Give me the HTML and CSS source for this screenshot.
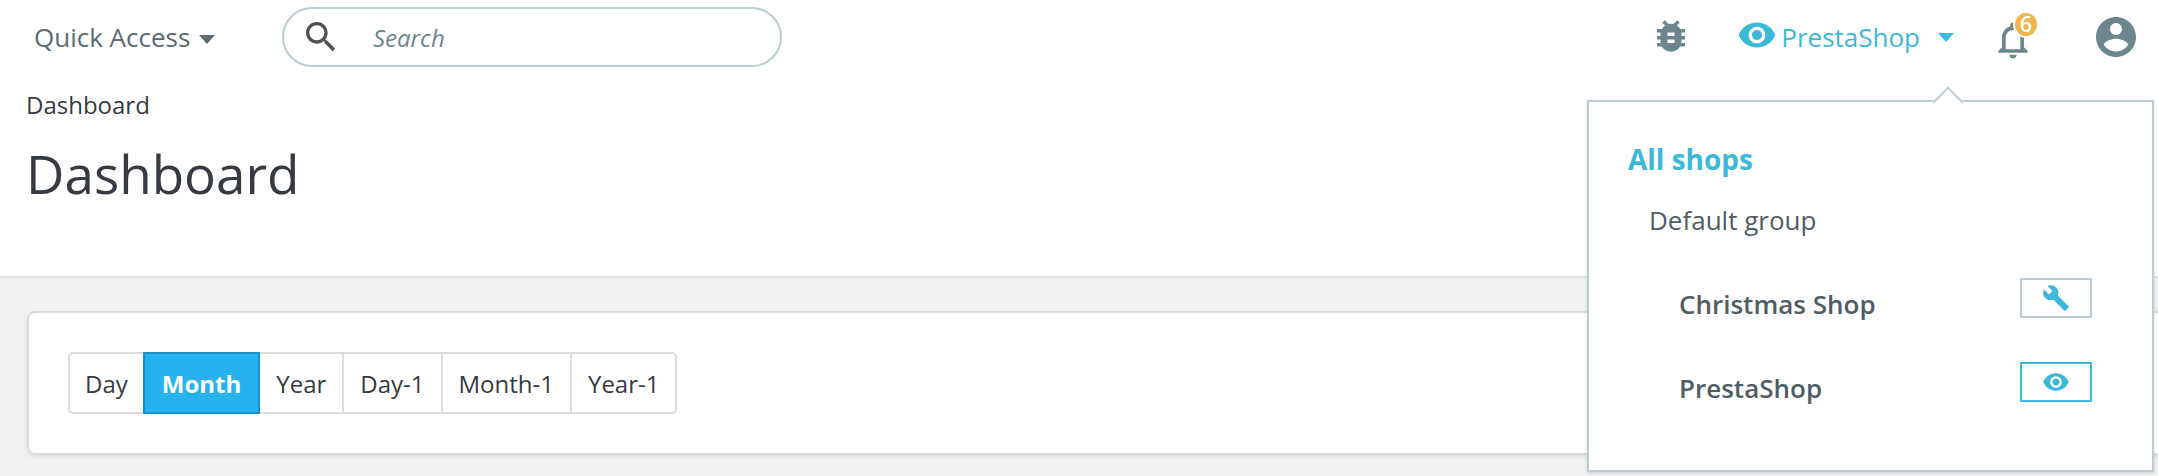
FILE: index.html
```html
<!DOCTYPE html>
<html lang="en">
<head>
	<meta charset="UTF-8">
	<title>Dashboard</title>
	<link rel="stylesheet" href="styles.css">
</head>
<body>
	<header class="topbar">
		<a class="quick-access">Quick Access <span class="caret"></span></a>
		<div class="search">
			<svg class="search-icon" viewBox="0 0 24 24"><path d="M15.5 14h-.79l-.28-.27C15.41 12.59 16 11.11 16 9.5 16 5.91 13.09 3 9.5 3S3 5.91 3 9.5 5.91 16 9.5 16c1.61 0 3.09-.59 4.23-1.57l.27.28v.79l5 4.99L20.49 19l-4.99-5zm-6 0C7.01 14 5 11.99 5 9.5S7.01 5 9.5 5 14 7.01 14 9.5 11.99 14 9.5 14z"/></svg>
			<span class="search-text">Search</span>
		</div>
		<div class="topbar-right">
			<svg class="bug-icon" viewBox="0 0 24 24"><path d="M20 8h-2.81c-.45-.78-1.07-1.45-1.82-1.96L17 4.41 15.59 3l-2.17 2.17C12.96 5.06 12.49 5 12 5c-.49 0-.96.06-1.41.17L8.41 3 7 4.41l1.62 1.63C7.88 6.55 7.26 7.22 6.81 8H4v2h2.09c-.05.33-.09.66-.09 1v1H4v2h2v1c0 .34.04.67.09 1H4v2h2.81c1.04 1.79 2.97 3 5.19 3s4.15-1.21 5.19-3H20v-2h-2.09c.05-.33.09-.66.09-1v-1h2v-2h-2v-1c0-.34-.04-.67-.09-1H20V8zm-6 8h-4v-2h4v2zm0-4h-4v-2h4v2z"/></svg>
			<div class="shop-switch">
				<svg class="eye-icon" viewBox="0 0 24 24"><path d="M12 4.5C7 4.5 2.73 7.61 1 12c1.73 4.39 6 7.5 11 7.5s9.27-3.11 11-7.5c-1.73-4.39-6-7.5-11-7.5zM12 17c-2.76 0-5-2.24-5-5s2.24-5 5-5 5 2.24 5 5-2.24 5-5 5zm0-8c-1.66 0-3 1.34-3 3s1.34 3 3 3 3-1.34 3-3-1.34-3-3-3z"/></svg>
				<span class="shop-name">PrestaShop</span>
				<span class="caret caret-blue"></span>
			</div>
			<div class="bell">
				<svg class="bell-icon" viewBox="0 0 24 24"><path d="M12 22c1.1 0 2-.9 2-2h-4c0 1.1.89 2 2 2zm6-6v-5c0-3.07-1.64-5.64-4.5-6.32V4c0-.83-.67-1.5-1.5-1.5s-1.5.67-1.5 1.5v.68C7.63 5.36 6 7.92 6 11v5l-2 2v1h16v-1l-2-2zm-2 1H8v-6c0-2.48 1.51-4.5 4-4.5s4 2.02 4 4.5v6z"/></svg>
				<span class="badge">6</span>
			</div>
			<svg class="user-icon" viewBox="0 0 24 24"><path d="M12 2C6.48 2 2 6.48 2 12s4.48 10 10 10 10-4.48 10-10S17.52 2 12 2zm0 3c1.66 0 3 1.34 3 3s-1.34 3-3 3-3-1.34-3-3 1.34-3 3-3zm0 14.2c-2.5 0-4.71-1.28-6-3.22.03-1.99 4-3.08 6-3.08 1.99 0 5.97 1.09 6 3.08-1.29 1.94-3.5 3.22-6 3.22z"/></svg>
		</div>
	</header>

	<section class="page-head">
		<div class="breadcrumb">Dashboard</div>
		<h1 class="page-title">Dashboard</h1>
	</section>

	<main class="content">
		<div class="card">
			<div class="btn-group">
				<button type="button" class="btn">Day</button>
				<button type="button" class="btn active">Month</button>
				<button type="button" class="btn">Year</button>
				<button type="button" class="btn">Day-1</button>
				<button type="button" class="btn">Month-1</button>
				<button type="button" class="btn">Year-1</button>
			</div>
		</div>
	</main>

	<div class="shop-menu">
		<div class="all-shops">All shops</div>
		<div class="shop-group">Default group</div>
		<div class="shop-row">
			<span>Christmas Shop</span>
			<a class="shop-action"><svg viewBox="0 0 24 24"><path d="M22.7 19l-9.1-9.1c.9-2.3.4-5-1.5-6.9-2-2-5-2.4-7.4-1.3L9 6 6 9 1.6 4.7C.4 7.1.9 10.1 2.9 12.1c1.9 1.9 4.6 2.4 6.9 1.5l9.1 9.1c.4.4 1 .4 1.4 0l2.3-2.3c.5-.4.5-1.1.1-1.4z"/></svg></a>
		</div>
		<div class="shop-row">
			<span>PrestaShop</span>
			<a class="shop-action current"><svg viewBox="0 0 24 24"><path d="M12 4.5C7 4.5 2.73 7.61 1 12c1.73 4.39 6 7.5 11 7.5s9.27-3.11 11-7.5c-1.73-4.39-6-7.5-11-7.5zM12 17c-2.76 0-5-2.24-5-5s2.24-5 5-5 5 2.24 5 5-2.24 5-5 5zm0-8c-1.66 0-3 1.34-3 3s1.34 3 3 3 3-1.34 3-3-1.34-3-3-3z"/></svg></a>
		</div>
	</div>
</body>
</html>
```

FILE: styles.css
```css
html, body {
	overflow: hidden;
}
body {
	margin: 0;
	position: relative;
	height: 476px;
	font-family: "Open Sans", sans-serif;
	color: #363a41;
	background: #eff1f2;
}
svg {
	display: block;
	fill: currentColor;
}

/* top bar */
.topbar {
	display: flex;
	align-items: center;
	height: 74px;
	padding-left: 34px;
	background: white;
}
.quick-access {
	display: flex;
	align-items: center;
	gap: 9px;
	width: 248px;
	font-size: 26px;
	color: #5a6b73;
}
.caret {
	display: block;
	margin-top: 5px;
	border-top: 9px solid #5a6b73;
	border-left: 8px solid transparent;
	border-right: 8px solid transparent;
}
.caret-blue {
	margin-top: 0;
	border-top-color: #3cb9d8;
}
.search {
	display: flex;
	align-items: center;
	box-sizing: border-box;
	width: 500px;
	height: 60px;
	padding-left: 17px;
	border: 2px solid #bbcdd2;
	border-radius: 30px;
}
.search-icon {
	width: 40px;
	height: 40px;
	color: #4f4f4f;
}
.search-text {
	margin-left: 32px;
	font-size: 24px;
	font-style: italic;
	color: #6c868e;
}
.topbar-right {
	display: flex;
	align-items: center;
	margin-left: auto;
	padding-right: 18px;
	color: #6c868e;
}
.bug-icon {
	width: 42px;
	height: 42px;
	margin-bottom: 3px;
}
.shop-switch {
	display: flex;
	align-items: center;
	margin-left: 45px;
	color: #3cb9d8;
}
.eye-icon {
	width: 40px;
	height: 40px;
	margin-bottom: 5px;
}
.shop-name {
	margin-left: 4px;
	font-size: 26px;
}
.shop-switch .caret {
	margin-left: 18px;
}
.bell {
	position: relative;
	margin-left: 37px;
	margin-top: 6px;
}
.bell-icon {
	width: 44px;
	height: 44px;
}
.badge {
	position: absolute;
	top: -5px;
	left: 24px;
	width: 22px;
	height: 23px;
	border-radius: 50%;
	background: #f0b44f;
	box-shadow: 0 0 0 2px white;
	color: white;
	font-size: 21px;
	font-weight: 600;
	line-height: 23px;
	text-align: center;
}
.user-icon {
	width: 48px;
	height: 48px;
	margin-left: 57px;
}

/* page head */
.page-head {
	height: 202px;
	padding-left: 26px;
	background: white;
	border-bottom: 2px solid #dfe1e3;
}
.breadcrumb {
	padding-top: 14px;
	font-size: 24px;
}
.page-title {
	margin: 15px 0 0;
	font-size: 53px;
	font-weight: 400;
	line-height: 76px;
}

/* graph card */
.content {
	padding: 33px 0 0 27px;
}
.card {
	box-sizing: border-box;
	height: 144px;
	margin-right: -40px;
	padding: 39px 39px;
	background: white;
	border: 2px solid #dbdbdb;
	border-radius: 8px;
	box-shadow: 0 2px 4px rgba(0, 0, 0, .08);
}
.btn-group {
	display: flex;
}
.btn {
	height: 62px;
	padding: 0 16px;
	font: 24px "Open Sans", sans-serif;
	color: #363a41;
	background: white;
	border: 2px solid #dcdcdc;
	border-left-width: 0;
}
.btn:first-child {
	padding: 0 15px;
	border-left-width: 2px;
	border-radius: 5px 0 0 5px;
}
.btn:last-child {
	border-radius: 0 5px 5px 0;
}
.btn.active {
	margin-left: -2px;
	padding: 0 17px;
	font-weight: 700;
	color: white;
	background: #25b2ee;
	border: 2px solid #1a8fc4;
}

/* shop dropdown */
.shop-menu {
	position: absolute;
	top: 100px;
	left: 1587px;
	box-sizing: border-box;
	width: 567px;
	height: 372px;
	padding: 38px 60px 0 39px;
	color: #4f5d65;
	background: white;
	border: 2px solid #bbcdd2;
	box-shadow: 0 1px 3px rgba(0, 0, 0, .15);
}
.shop-menu::before {
	content: "";
	position: absolute;
	top: -11px;
	left: 348px;
	width: 20px;
	height: 20px;
	background: white;
	border-top: 2px solid #bbcdd2;
	border-left: 2px solid #bbcdd2;
	transform: rotate(45deg);
}
.all-shops {
	font-size: 28px;
	font-weight: 700;
	color: #3cb9d8;
}
.shop-group {
	margin: 24px 0 0 21px;
	font-size: 26px;
}
.shop-row {
	display: flex;
	align-items: center;
	justify-content: space-between;
	height: 40px;
	margin-left: 51px;
	font-size: 26px;
	font-weight: 600;
}
.shop-row span {
	padding-top: 12px;
}
.shop-group + .shop-row {
	margin-top: 40px;
}
.shop-row + .shop-row {
	margin-top: 44px;
}
.shop-action {
	display: flex;
	align-items: center;
	justify-content: center;
	box-sizing: border-box;
	width: 72px;
	height: 40px;
	color: #3cb9d8;
	border: 2px solid #bbcdd2;
}
.shop-action.current {
	border-color: #3cb9d8;
}
.shop-action svg {
	width: 28px;
	height: 28px;
}
```
